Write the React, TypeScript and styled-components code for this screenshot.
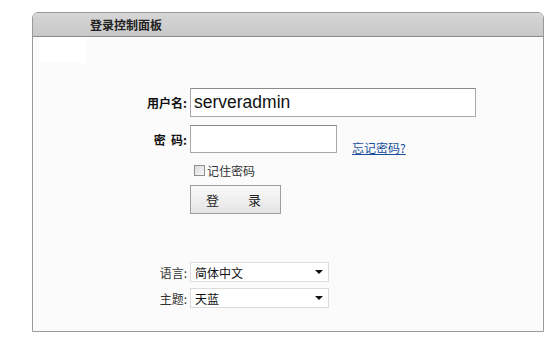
import styled, { createGlobalStyle } from "styled-components";

const GlobalStyle = createGlobalStyle`
  html, body {
    margin: 0;
    padding: 0;
    background: #ffffff;
  }
  body {
    font-family: "Noto Sans CJK SC", "Liberation Sans", sans-serif;
    font-size: 12px;
    color: #222;
  }
`;

const Page = styled.div`
  padding: 12px 0 0 32px;
`;

const Panel = styled.div`
  width: 510px;
  height: 318px;
  border: 1px solid #9a9a9a;
  border-radius: 6px 6px 0 0;
  background: #fbfbfb;
  display: flex;
  flex-direction: column;
`;

const Header = styled.div`
  height: 23px;
  border-bottom: 1px solid #8c8c8c;
  border-radius: 5px 5px 0 0;
  background: linear-gradient(#d6d6d6, #c8c8c8);
  display: flex;
  align-items: center;
  padding-left: 57px;
  font-size: 12px;
  font-weight: bold;
  color: #222;
`;

const Blank = styled.div`
  width: 46px;
  height: 25px;
  margin: 1px 0 0 7px;
  background: #ffffff;
`;

const Form = styled.div`
  display: grid;
  grid-template-columns: 154px auto;
  column-gap: 3px;
  align-items: center;
  margin-top: 25px;
`;

const Label = styled.div<{ $bold?: boolean }>`
  text-align: right;
  font-weight: ${(p) => (p.$bold ? "bold" : "normal")};
  font-size: 12px;
  color: ${(p) => (p.$bold ? "#111" : "#333")};
  white-space: pre;
`;

const Field = styled.div`
  display: flex;
  align-items: center;
  gap: 15px;
`;

const TextInput = styled.input<{ $w: number; $h: number }>`
  box-sizing: border-box;
  width: ${(p) => p.$w}px;
  height: ${(p) => p.$h}px;
  border: 1px solid #a8a8a8;
  border-top-color: #8a8a8a;
  background: #fff;
  padding: 0 3px;
  font-family: "Liberation Sans", Arial, sans-serif;
  font-size: 17.5px;
  color: #111;
  outline: none;
`;

const Link = styled.a`
  align-self: flex-end;
  line-height: 16px;
  margin-bottom: -3px;
  color: #1a4f9c;
  text-decoration: underline;
  font-size: 12px;
`;

const Check = styled.label`
  display: flex;
  align-items: center;
  gap: 2px;
  margin-left: 4px;
  font-size: 12px;
  color: #333;
`;

const Box = styled.span`
  box-sizing: border-box;
  width: 11px;
  height: 11px;
  border: 1px solid #8e8e8e;
  background: linear-gradient(135deg, #dcdcdc, #f8f8f8);
`;

const Button = styled.button`
  box-sizing: border-box;
  width: 91px;
  height: 29px;
  border: 1px solid #9e9e9e;
  background: linear-gradient(#fafafa, #e4e4e4);
  font-family: "Noto Sans CJK SC", sans-serif;
  font-size: 13px;
  color: #222;
  display: flex;
  justify-content: space-between;
  padding: 0 19px 0 15px;
  align-items: center;
`;

const Select = styled.div`
  box-sizing: border-box;
  width: 139px;
  height: 20px;
  border: 1px solid #dcdcdc;
  background: #fff;
  display: flex;
  align-items: center;
  justify-content: space-between;
  padding: 0 5px 0 4px;
  font-size: 12px;
  color: #111;
`;

const Arrow = styled.span`
  width: 0;
  height: 0;
  border-left: 4px solid transparent;
  border-right: 4px solid transparent;
  border-top: 4px solid #111;
`;

const Spacer = styled.div<{ $h: number }>`
  grid-column: 1 / 3;
  height: ${(p) => p.$h}px;
`;

export default function App() {
  return (
    <>
      <GlobalStyle />
      <Page>
        <Panel>
          <Header>登录控制面板</Header>
          <Blank />
          <Form>
            <Label $bold>用户名:</Label>
            <Field>
              <TextInput $w={286} $h={29} defaultValue="serveradmin" />
            </Field>
            <Spacer $h={8} />
            <Label $bold>{"密  码:"}</Label>
            <Field>
              <TextInput $w={147} $h={28} type="password" />
              <Link href="#">忘记密码?</Link>
            </Field>
            <Spacer $h={9} />
            <div />
            <Check>
              <Box />
              记住密码
            </Check>
            <Spacer $h={6} />
            <div />
            <Field>
              <Button>
                <span>登</span>
                <span>录</span>
              </Button>
            </Field>
            <Spacer $h={48} />
            <Label>语言:</Label>
            <Select>
              简体中文
              <Arrow />
            </Select>
            <Spacer $h={6} />
            <Label>主题:</Label>
            <Select>
              天蓝
              <Arrow />
            </Select>
          </Form>
        </Panel>
      </Page>
    </>
  );
}
